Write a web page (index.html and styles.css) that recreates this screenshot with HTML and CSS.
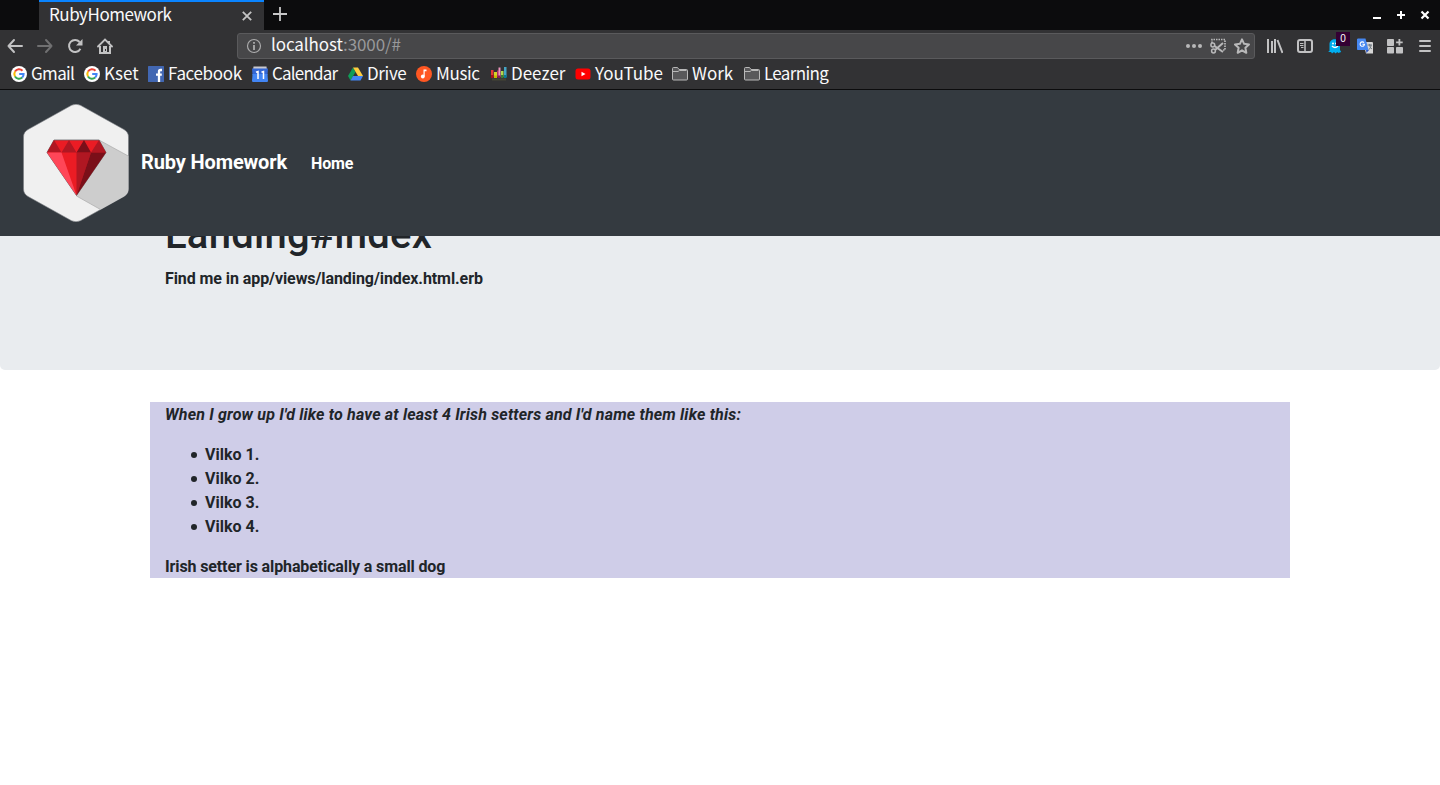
FILE: index.html
```html
<!DOCTYPE html>
<html lang="en">
<head>
<meta charset="utf-8">
<title>RubyHomework</title>
<link rel="stylesheet" href="styles.css">
</head>
<body>
<header class="chrome">
  <div class="tabs">
    <div class="tab"><span class="ui t-tab">RubyHomework</span>
      <svg class="close" width="10" height="10" viewBox="0 0 10 10"><path d="M.8.8l8.400 8.400M9.200.8L.8 9.200" stroke="#c4c4c4" stroke-width="1.800"/></svg></div>
    <svg class="newtab" width="14" height="14" viewBox="0 0 14 14"><path d="M7 0v14M0 7h14" stroke="#c8c8c8" stroke-width="1.800"/></svg>
    <div class="window">
      <svg width="10" height="10" viewBox="0 0 10 10"><path d="M1 8h8" stroke="#fff" stroke-width="2"/></svg>
      <svg width="10" height="10" viewBox="0 0 10 10"><path d="M5 1v8M1 5h8" stroke="#fff" stroke-width="2"/></svg>
      <svg width="10" height="10" viewBox="0 0 10 10"><path d="M1.500 1.500l7 7M8.500 1.500l-7 7" stroke="#fff" stroke-width="2.200"/></svg>
    </div>
  </div>
  <div class="toolbar">
    <div class="nav-icons">
      <svg width="16" height="16" viewBox="0 0 16 16" fill="none" stroke="#c2c2c3" stroke-width="2" stroke-linecap="round" stroke-linejoin="round"><path d="M15 8H1.500M7 2L1.500 8 7 14"/></svg>
      <svg width="16" height="16" viewBox="0 0 16 16" fill="none" stroke="#707071" stroke-width="2" stroke-linecap="round" stroke-linejoin="round"><path d="M1 8h13.500M9 2l5.500 6L9 14"/></svg>
      <svg width="16" height="16" viewBox="0 0 16 16"><path d="M13.400 10.700A6 6 0 1 1 12.600 4" fill="none" stroke="#c2c2c3" stroke-width="2"/><path d="M15.500 1v6.500H9z" fill="#c2c2c3"/></svg>
      <svg width="16" height="16" viewBox="0 0 16 16"><path d="M1 8.500L8 1.500l7 7" fill="none" stroke="#c2c2c3" stroke-width="1.800" stroke-linecap="round"/><path d="M3 8v7h10V8M12 3v3" fill="none" stroke="#c2c2c3" stroke-width="2"/><path d="M6 8h4v7H6z" fill="#c2c2c3"/><path d="M8 11h1v2H8z" fill="#323234"/></svg>
    </div>
    <div class="urlbar">
      <svg width="16" height="16" viewBox="0 0 16 16"><circle cx="8" cy="8" r="6.500" fill="none" stroke="#aaaaab" stroke-width="1.200"/><path d="M8 7v5M8 4v1.700" stroke="#b8b8b9" stroke-width="1.600"/></svg>
      <span class="ui t-url">localhost<span class="dim">:3000/#</span></span>
      <div class="url-actions">
        <svg width="16" height="16" viewBox="0 0 16 16" fill="#b8b8b9"><circle cx="2" cy="8" r="2"/><circle cx="8" cy="8" r="2"/><circle cx="14" cy="8" r="2"/></svg>
        <svg width="16" height="16" viewBox="0 0 16 16" fill="none" stroke="#b8b8b9"><path d="M2 5V1.500h13V12h-2.500" stroke-width="1.700" stroke-dasharray="1.500 1"/><circle cx="2.800" cy="7" r="1.900" stroke-width="1.500"/><circle cx="3.500" cy="13" r="1.900" stroke-width="1.500"/><path d="M4.500 8l8.500 6M5 12l8-7" stroke-width="2"/></svg>
        <svg width="16" height="16" viewBox="0 0 16 16"><path d="M8 1.300l2.100 4.500 4.900.6-3.600 3.400.9 5L8 12.300l-4.300 2.500.9-5L1 6.400l4.900-.6z" fill="none" stroke="#b8b8b9" stroke-width="2" stroke-linejoin="round"/></svg>
      </div>
    </div>
    <div class="ext">
      <svg width="16" height="16" viewBox="0 0 16 16" stroke="#c2c2c3" stroke-width="2"><path d="M1 1v14M5 3v12M8 1v14M10.500 2l5 13"/></svg>
      <svg width="16" height="16" viewBox="0 0 16 16" fill="none" stroke="#c2c2c3"><rect x="1" y="2" width="14" height="12" rx="2" stroke-width="2"/><path d="M8 2v12" stroke-width="1.500"/><path d="M3 5.500h3.500M3 7.500h3.500M4 9.500h2.500" stroke-width="1"/></svg>
      <div class="ghost">
        <svg width="16" height="16" viewBox="0 0 16 16"><path d="M2.500 13V6C2.500-.5 13-.5 13 6v6l1.200 2-3 .9-1-1-1.600 1.500-1.600-1.500-2 1.500-1-1.400L1 14z" fill="#00aef0"/><circle cx="6" cy="5.500" r="1" fill="#fff"/><circle cx="9" cy="5.500" r="1" fill="#fff"/><path d="M5 8q3 3 6 0" fill="none" stroke="#fff" stroke-width="1.400"/></svg>
        <span class="badge">0</span>
      </div>
      <svg width="16" height="16" viewBox="0 0 16 16"><path d="M6 4h9a1 1 0 0 1 1 1v10.500H9z" fill="#d6d6d6"/><path d="M.8.5h7.700l3 11.500H.8A.8.800 0 0 1 0 11.200V1.300z" fill="#4688f1"/><path d="M9 12h3l-2.500 3z" fill="#2b55c4"/><path d="M10.500 7H15M12.700 6v1c0 2 1 3 2.300 4M14 7c0 2-1 4-2.500 5" fill="none" stroke="#6d7780"/><path d="M7 4.700a2.200 2.200 0 1 0 .5 1.600H5.400" fill="none" stroke="#fff" stroke-width="1.100"/></svg>
      <svg width="16" height="16" viewBox="0 0 16 16" fill="#c2c2c3"><rect y="1" width="7" height="7" rx=".8"/><rect y="9" width="7" height="6.500" rx=".8"/><rect x="9" y="9" width="7" height="6.500" rx=".8"/><path d="M11.500 1h1.800v2.400h2.400v1.800h-2.400v2.400h-1.800V5.200H9.100V3.400h2.400z"/></svg>
      <svg width="16" height="16" viewBox="0 0 16 16" stroke="#c2c2c3" stroke-width="2" stroke-linecap="round"><path d="M3 3h10M3 8h10M3 13h10"/></svg>
    </div>
  </div>
  <nav class="bookmarks ui">
    <a class="tight"><svg width="16" height="16" viewBox="0 0 16 16"><circle cx="8" cy="8" r="8" fill="#fff"/><g fill="none" stroke-width="2"><path d="M11.500 4.700A4.700 4.700 0 0 0 4 5.600" stroke="#ea4335"/><path d="M4 5.600a4.700 4.700 0 0 0 0 4.800" stroke="#fbbc05"/><path d="M4 10.400a4.700 4.700 0 0 0 7.200 1.100" stroke="#34a853"/><path d="M11.200 11.500A4.700 4.700 0 0 0 12.600 8H8.200" stroke="#4285f4"/></g></svg><span>Gmail</span></a>
    <a><svg width="16" height="16" viewBox="0 0 16 16"><circle cx="8" cy="8" r="8" fill="#fff"/><g fill="none" stroke-width="2"><path d="M11.500 4.700A4.700 4.700 0 0 0 4 5.600" stroke="#ea4335"/><path d="M4 5.600a4.700 4.700 0 0 0 0 4.800" stroke="#fbbc05"/><path d="M4 10.400a4.700 4.700 0 0 0 7.200 1.100" stroke="#34a853"/><path d="M11.200 11.500A4.700 4.700 0 0 0 12.600 8H8.200" stroke="#4285f4"/></g></svg><span>Kset</span></a>
    <a class="snug"><svg width="16" height="16" viewBox="0 0 16 16"><rect width="16" height="16" rx=".5" fill="#4267b2"/><path d="M14 4h-1.500q-1.500 0-1.500 1.700V16M8 8.700h5.800" fill="none" stroke="#fff" stroke-width="2.300"/></svg><span>Facebook</span></a>
    <a class="tighter"><svg width="16" height="16" viewBox="0 0 16 16"><path d="M1.500.5h13L15 4H1z" fill="#c9c9d0"/><path d="M0 2.500h16L15.500 9H.5z" fill="#3367d6"/><path d="M.5 8h15l.5 7.200-.8.800H.8l-.8-.8z" fill="#4285f4"/><path d="M4 6.300l2-.8V13M9.500 6.300l2-.8V13" fill="none" stroke="#fff" stroke-width="1.500"/></svg><span>Calendar</span></a>
    <a class="snug"><svg width="15" height="16" viewBox="0 0 15 16"><path d="M5 1.500L0 10l2.500 4.500 5-8.500z" fill="#0f9d58"/><path d="M5 1.500h5l5 8.500h-5z" fill="#ffcd40"/><path d="M5 10h10l-2.500 4.500h-10z" fill="#4285f4"/></svg><span>Drive</span></a>
    <a class="snug"><svg width="16" height="16" viewBox="0 0 16 16"><circle cx="8" cy="8" r="8" fill="#ff5722"/><circle cx="6.800" cy="10.500" r="1.900" fill="#fff"/><path d="M7.500 3.500h3V5.300H8.700v5.200H7.500z" fill="#fff"/></svg><span>Music</span></a>
    <a><svg width="16" height="16" viewBox="0 0 16 16"><path d="M0 4h2.500v7H0z" fill="#e63737"/><path d="M3 6h3v5H3z" fill="#d5d325"/><path d="M6 4.500h2V11H6z" fill="#b02f65"/><path d="M7.500 1.500h2V11h-2z" fill="#ef94bd"/><path d="M10 5h2.500v6H10z" fill="#b1d94c"/><path d="M13 1h2.500v10H13z" fill="#45a6c6"/><path d="M0 9h2.500v3H0z" fill="#a80f1b"/><path d="M3 9.500h3v2.500H3z" fill="#c5b900"/><path d="M6.500 9.500h3V12h-3z" fill="#8e1953"/><path d="M10 9h2.500v3H10z" fill="#3d7c34"/><path d="M13 9h2.500v3H13z" fill="#087a98"/><path d="M1 12.500h14v2H1z" fill="#454534"/></svg><span>Deezer</span></a>
    <a><svg width="16" height="16" viewBox="0 0 16 16"><rect x=".5" y="2.500" width="15" height="11" rx="2.500" fill="#f00"/><path d="M6.500 5.700v4.600l4-2.300z" fill="#fff"/></svg><span>YouTube</span></a>
    <a><svg width="16" height="16" viewBox="0 0 16 16" fill="#58585a" stroke="#b8b8b8"><path d="M.5 13V2.500q0-1 1-1h4l1.500 2h7.500q1 0 1 1V13q0 1-1 1h-13q-1 0-1-1z"/><path d="M1 5.500h5l1.500-1h7"/></svg><span>Work</span></a>
    <a class="tight"><svg width="16" height="16" viewBox="0 0 16 16" fill="#58585a" stroke="#b8b8b8"><path d="M.5 13V2.500q0-1 1-1h4l1.500 2h7.500q1 0 1 1V13q0 1-1 1h-13q-1 0-1-1z"/><path d="M1 5.500h5l1.500-1h7"/></svg><span>Learning</span></a>
  </nav>
</header>
<nav class="navbar">
  <svg class="logo" width="106" height="118" viewBox="0 0 106 118">
    <path d="M48.500 1.300Q53 -1 57.500 1.300L101 25.500Q105.500 28 105.500 33V85Q105.500 90 101 92.500L57.500 116.700Q53 119 48.500 116.700L5 92.500Q.5 90 .5 85V33Q.5 28 5 25.500z" fill="#f0f0f0" stroke="#777b80" stroke-width=".6"/>
    <path d="M76 36l29.300 16V85q0 5-4.500 7.500L77.500 105.500 53.500 92z" fill="#cdcdcd"/>
    <path d="M76 36l29.300 16M53.500 92l24 13.500" stroke="#aaa" stroke-width=".7"/>
    <path d="M31 36h45l7 12.500L53.500 91.500 24 48.500z" fill="#eb1c24" stroke="#64666a" stroke-width=".8"/>
    <path d="M31 36l7.500 12.500H24zM46 36l7.500 12.500h-15zM76 36l7 12.500H68zM53.500 48.500H68L53.500 91.500z" fill="#b01722"/>
    <path d="M61 36l7 12.500H53.500zM68 48.500h15L53.500 91.500z" fill="#7a0f19"/>
    <path d="M24 48.500h14.500l15 43z" fill="#ff4658"/>
  </svg>
  <a class="brand">Ruby Homework</a>
  <a class="home">Home</a>
</nav>
<main>
  <section class="jumbotron">
    <div class="container"><h1>Landing#index</h1><p class="path">Find me in app/views/landing/index.html.erb</p></div>
  </section>
  <section class="container setters">
    <p class="wish"><em>When I grow up I'd like to have at least 4 Irish setters and I'd name them like this:</em></p>
    <ul><li>Vilko 1.</li><li>Vilko 2.</li><li>Vilko 3.</li><li>Vilko 4.</li></ul>
    <p class="note">Irish setter is alphabetically a small dog</p>
  </section>
</main>
</body>
</html>
```
FILE: styles.css
```css
*{box-sizing:border-box}
html,body{margin:0;height:100%;overflow:hidden}
body{background:#fff;color:#212529;font:700 16px/24px Roboto,sans-serif}
svg{display:block;flex:none}
.chrome{height:90px;background:#323234;border-bottom:1px solid #0c0c0d;position:relative;z-index:3}
.ui{font-family:"Noto Sans CJK SC",sans-serif;font-weight:400;font-size:17px;color:#f9f9fa;white-space:nowrap}
.tabs{height:30px;background:#0c0c0d;display:flex;align-items:center;padding-left:39px}
.tab{width:225px;height:30px;background:#323234;border-top:2px solid #0a84ff;display:flex;align-items:center;justify-content:space-between;padding:0 12px 0 10px}
.close{margin-bottom:1px}
.t-tab{line-height:26px;padding-bottom:4px;letter-spacing:-.48px}
.newtab{margin-left:9px;margin-bottom:2px}
.window{margin-left:auto;display:flex;gap:14px;padding-right:10px}
.toolbar{height:30px;display:flex;align-items:center;padding-top:2px}
.nav-icons{display:flex;gap:14px;width:237px;padding-left:7px}
.urlbar{width:1018px;height:26px;background:#474749;border:1px solid #5a5a5c;border-radius:3px;display:flex;align-items:center;padding:0 4px 0 8px}
.t-url{margin-left:9px;line-height:20px;padding-bottom:4px;letter-spacing:-.1px}
.t-url .dim{letter-spacing:-.1px}
.dim{color:#99999b}
.url-actions{margin-left:auto;display:flex;gap:8px}
.ext{display:flex;gap:14px;padding-left:12px}
.ghost{position:relative}
.badge{position:absolute;left:9px;top:-6px;width:14px;height:14px;background:#330033;color:#fff;font:10px/13px "Liberation Sans",sans-serif;text-align:center}
.bookmarks{height:28px;display:grid;grid-template-columns:73px 64px 104px 96px 68px 75px 84px 97px 72px 90px;align-items:center;padding-left:11px;line-height:24px}
.bookmarks a{display:flex;align-items:center;gap:4px}
.bookmarks span{padding-bottom:2px}
.bookmarks .snug{letter-spacing:-.35px}
.bookmarks .tight{letter-spacing:-.65px}
.bookmarks .tighter{letter-spacing:-.8px}
.navbar{height:146px;background:#343a40;display:flex;align-items:center;padding-left:23px;position:relative;z-index:2;color:#fff}
.logo{margin-bottom:1px}
.brand{font-size:20px;margin-left:12px;line-height:30px;padding-bottom:2px;letter-spacing:-.13px}
.home{margin-left:24px;padding-top:2px;letter-spacing:-.15px}
main{margin-top:-90px}
.jumbotron{background:#e9ecef;border-radius:5px;padding:65px 0 63px;margin-bottom:32px}
.container{width:1140px;margin-left:auto;margin-right:auto;padding:0 15px}
h1{font-size:40px;line-height:48px;font-weight:500;margin:0 0 8px;letter-spacing:.25px}
p{margin:0 0 16px}
ul{margin:0 0 16px;padding-left:40px;list-style:none}
li{display:flex;align-items:center}
li::before{content:"";width:6px;height:6px;border-radius:50%;background:#212529;margin:0 8px 0 -14px}
.path{letter-spacing:-.08px}
.setters{background:#cfcde8;height:176px;padding-top:1px}
.wish{letter-spacing:.18px}
.note{letter-spacing:-.12px;margin:0}
```
